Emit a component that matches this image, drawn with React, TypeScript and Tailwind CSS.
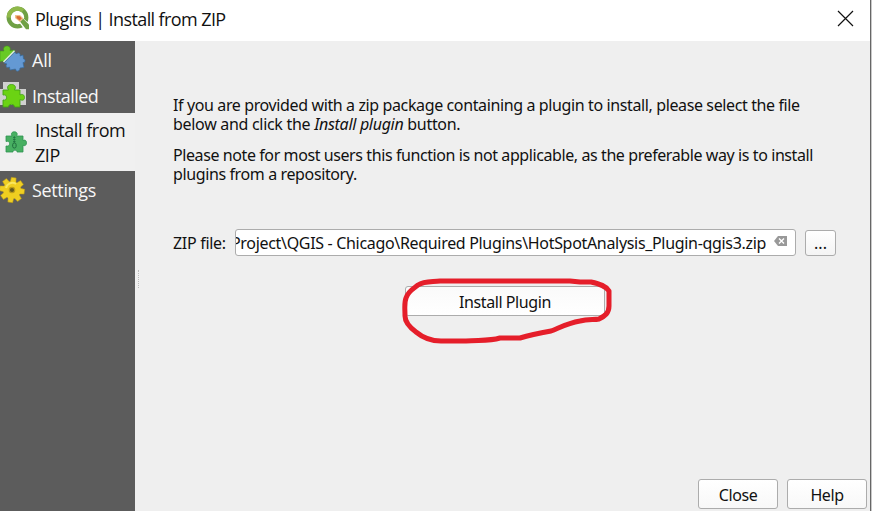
import type { ReactNode } from 'react';

function QgisLogo() {
  return (
    <svg width="24" height="24" viewBox="0 0 24 24" className="shrink-0">
      <circle cx="11.500" cy="11.500" r="8.800" fill="none" stroke="#6fa044" strokeWidth="4.200" />
      <path d="M2.700 11.500A8.800 8.800 0 0 1 17 4.600" fill="none" stroke="#8fb84a" strokeWidth="4.200" />
      <path d="M12 15l4-4 7.500 7v5.500h-5z" fill="#fff" />
      <path d="M14 15.500l3-3 6 6v4.700h-3z" fill="#6fa044" />
      <path d="M9 9h5l3.500 3.500-3.500 3.500-5-4z" fill="#f0c08a" />
      <path d="M10.500 10l3.500.2 1.800 2.300-2.200 2-3.100-2.500z" fill="#d96b35" />
    </svg>
  );
}

function AllIcon() {
  return (
    <svg width="26" height="28" viewBox="0 0 26 28" className="shrink-0">
      <path d="M0 6h4C2.500 3 4.500 1 7 1s4 2 3 4.500l4.500-.5v2L4 17l-2-1-2 1z" fill="#68ca24" stroke="#419317" strokeWidth=".6" />
      <path d="M4 18L14.500 7l2 2c1.500-2 4.500-1 3.500 2l3-1 .5 4c2-.5 2.500 4-.5 3.500l1 5-4 .5c0 4-4.500 4-4.500 1L10 25l-.5-3c-3 1.500-4.500-1-2.500-3z" fill="#6499d3" stroke="#376b9f" strokeWidth=".7" />
      <path d="M3.500 17L14.500 5.800" stroke="#e0ebe6" strokeWidth="1.400" />
    </svg>
  );
}

function InstalledIcon() {
  return (
    <svg width="26" height="28" viewBox="0 0 26 28" className="shrink-0">
      <path d="M0 8h3V1h16v7h7v16H0z" fill="#cfd0cf" />
      <path d="M3 9h5.500C6.500 6 8 3.500 11.500 3.500S16.500 6 14.500 9H20v5c2.500-1.500 4.500 0 4.500 2.500S22.500 20 20 18.500V26h-5.500c.5-3.500-6.500-3.500-6 0H3v-7c2.500.5 3.500-.5 3.500-2.500S5.500 13.500 3 14z" fill="#6bd313" stroke="#43a316" strokeWidth=".9" />
    </svg>
  );
}

function ZipIcon() {
  return (
    <svg width="22" height="23" viewBox="0 0 22 23" className="shrink-0">
      <path d="M1 5h6C5.500 2.500 7 .8 9.300.8S13.200 2.500 11.500 5H18v4.500c2-1 3.500 0 3.500 2.300s-1.500 3.500-3.500 2.500V21h-6c.5-2.500-4.500-2.500-4 0H1v-6c3 .5 3.500-.7 3.500-2.500S3.500 10 1 10.500z" fill="#48b062" stroke="#2f9350" strokeWidth=".8" />
      <path d="M9.300 5v7M8 6.500h2.600M8 8.500h2.600M8 10.500h2.600" stroke="#1e6c3d" strokeWidth=".7" />
      <rect x="7.700" y="12" width="3.400" height="5" rx="1.600" fill="none" stroke="#1e6c3d" />
    </svg>
  );
}

function GearIcon() {
  const teeth = [0, 45, 90, 135, 180, 225, 270, 315];
  return (
    <svg width="26" height="28" viewBox="0 0 26 28" className="shrink-0">
      {teeth.map((angle) => (
        <path key={angle} d="M9 7l.6-5.500h4.800L15 7z" fill="#f0cf22" stroke="#b39517" strokeWidth=".5" transform={`rotate(${angle + 8} 12 14)`} />
      ))}
      <circle cx="12" cy="14" r="8.800" fill="#efce20" />
      <path d="M6 12a6.500 6.500 0 0 1 10-4" stroke="#f9e65d" strokeWidth="2" fill="none" />
      <circle cx="12" cy="14" r="2.700" fill="#62591f" stroke="#bd9e18" strokeWidth="1.200" />
    </svg>
  );
}

function Line({ children, className }: { children: ReactNode; className: string }) {
  return <div className={`whitespace-nowrap ${className}`}>{children}</div>;
}

export default function App() {
  return (
    <div className="relative flex h-[511px] w-[872px] flex-col overflow-hidden bg-[#efefef] font-['Noto_Sans',sans-serif] text-[16px] text-[#111]">
      <header className="flex h-[41px] items-start bg-white pl-[6px] pt-[6px] font-['Open_Sans',sans-serif]">
        <QgisLogo />
        <h1 className="ml-[5px] w-[790px] whitespace-nowrap text-[18px] leading-[27px] tracking-[-0.6px]">Plugins | Install from ZIP</h1>
        <svg width="17" height="17" viewBox="0 0 17 17" className="ml-[12px] mt-[4px] shrink-0">
          <path d="M1 1l15 15M16 1L1 16" stroke="#111" strokeWidth="1.200" />
        </svg>
      </header>
      <div className="flex h-[470px]">
        <nav className="w-[135px] shrink-0 bg-[#5c5c5c] font-['Open_Sans',sans-serif] text-[18px] text-[#f7f7f7]">
          <div className="flex h-[36px] items-center gap-[6px]"><AllIcon /><span className="pt-[3px] tracking-[-0.2px]">All</span></div>
          <div className="flex h-[36px] items-center gap-[6px]"><InstalledIcon /><span className="pt-[3px] tracking-[-0.55px]">Installed</span></div>
          <div className="flex h-[58px] items-center bg-[#f0f0f0] pl-[5px] text-[#111]">
            <ZipIcon />
            <div className="ml-[8px] whitespace-nowrap pt-px leading-[25px] tracking-[-0.45px]">Install from<br />ZIP</div>
          </div>
          <div className="flex h-[38px] items-center gap-[6px] pb-px"><GearIcon /><span className="pt-px tracking-[-0.35px]">Settings</span></div>
        </nav>
        <main className="flex h-full w-[737px] flex-col pl-[38px] pt-[55px]">
          <section className="flex flex-col gap-[12px] leading-[19px]">
            <div>
              <Line className="tracking-[-0.38px]">If you are provided with a zip package containing a plugin to install, please select the file</Line>
              <Line className="tracking-[-0.3px]">below and click the <em>Install plugin</em> button.</Line>
            </div>
            <div>
              <Line className="tracking-[-0.41px]">Please note for most users this function is not applicable, as the preferable way is to install</Line>
              <Line className="tracking-[-0.38px]">plugins from a repository.</Line>
            </div>
          </section>
          <div className="mt-[45px] flex h-[27px] items-center">
            <label className="w-[62px] whitespace-nowrap tracking-[-0.3px]">ZIP file:</label>
            <div className="flex h-[27px] w-[561px] items-center rounded-[3px] border border-[#acacac] bg-white">
              <div className="flex w-[530px] justify-end overflow-hidden"><span className="whitespace-nowrap tracking-[-0.32px]">Project\QGIS - Chicago\Required Plugins\HotSpotAnalysis_Plugin-qgis3.zip</span></div>
              <svg width="13" height="10" viewBox="0 0 13 10" className="mb-[3px] ml-[8px] shrink-0">
                <path d="M0 5l4-5h9v10H4z" fill="#999" /><path d="M5 2.500l5 5m0-5l-5 5" stroke="#fff" strokeWidth="1.400" />
              </svg>
            </div>
            <button className="ml-[9px] h-[26px] w-[31px] rounded-[3px] border border-[#acacac] bg-linear-to-b from-white to-[#f4f4f4] leading-[24px]">...</button>
          </div>
          <button className="ml-[232px] mt-[30px] h-[30px] w-[200px] shrink-0 rounded-[3px] border border-[#acacac] bg-linear-to-b from-[#fafafa] to-white pt-[2px] tracking-[-0.42px]">Install Plugin</button>
          <footer className="mt-[163px] flex gap-[9px] pl-[525px]">
            <button className="h-[30px] w-[80px] rounded-[3px] border border-[#acacac] bg-linear-to-b from-white to-[#f8f8f8] pt-[2px] tracking-[-0.4px]">Close</button>
            <button className="h-[30px] w-[80px] rounded-[3px] border border-[#acacac] bg-linear-to-b from-white to-[#f8f8f8] pt-[2px] tracking-[-0.4px]">Help</button>
          </footer>
        </main>
      </div>
      <div className="absolute left-[138px] top-[270px] h-[18px] border-l border-dotted border-[#bbb]" />
      <div className="absolute right-0 top-0 h-[511px] w-[2px] border-l border-[#666] bg-[#c8c8c8]" />
      <svg className="pointer-events-none absolute left-0 top-0" width="872" height="511" viewBox="0 0 872 511">
        <path d="M599 319C594 320 588 319 580 321C568 323 561 327 551 331C540 333 530 335 520 338L500 338C490 341 480 340 466 341H441C431 341 422 337 416 332C408 326 405 321 405 316C405 308 404 303 406 298C408 291 413 289 418 285C424 281 431 282 440 281H570L580 282H591C600 284 606 286 609 291V306C609 313 605 316 599 319Z" fill="none" stroke="#e51e2a" strokeWidth="5" strokeLinejoin="round" />
      </svg>
    </div>
  );
}
